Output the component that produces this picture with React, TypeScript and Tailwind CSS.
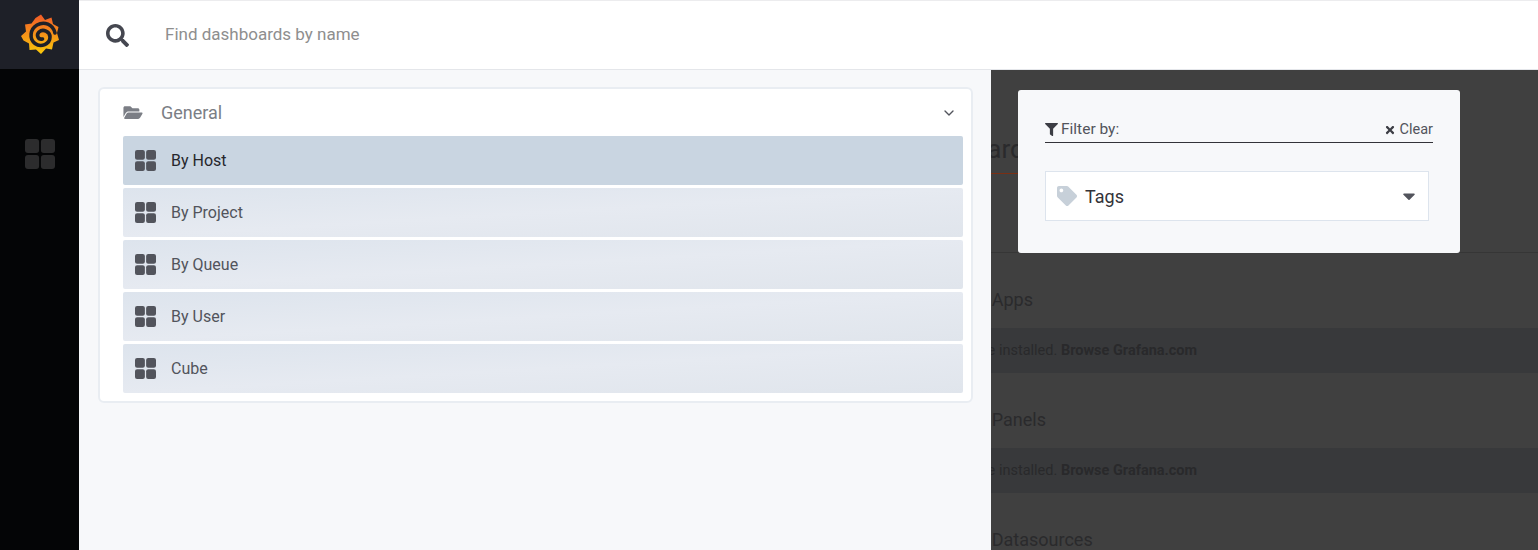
import { ChevronDown } from "lucide-react";
import { FaCaretDown, FaFilter, FaFolderOpen, FaSearch, FaTag, FaTimes } from "react-icons/fa";

const dashboards = ["By Host", "By Project", "By Queue", "By User", "Cube"];

const plugins = ["Installed Apps", "Installed Panels", "Installed Datasources"];

function GridIcon({ className }: { className: string }) {
  return (
    <svg viewBox="0 0 20 20" className={className} fill="currentColor">
      <rect x="0" y="0" width="9.4" height="9.4" rx="2" />
      <rect x="10.6" y="0" width="9.4" height="9.4" rx="2" />
      <rect x="0" y="10.6" width="9.4" height="9.4" rx="2" />
      <rect x="10.6" y="10.6" width="9.4" height="9.4" rx="2" />
    </svg>
  );
}

function GrafanaLogo() {
  return (
    <svg viewBox="0 0 40 44" className="h-[44px] w-[40px]">
      <defs>
        <linearGradient id="flame" x1="0" y1="0" x2="0" y2="1">
          <stop offset="0" stopColor="#f05a28" />
          <stop offset="1" stopColor="#fbca0a" />
        </linearGradient>
      </defs>
      <path
        fill="url(#flame)"
        d="M21 1.5 L25 7 L31.5 4.5 L33 11 L38.5 14 L37 20 L39 27 L33.5 29.5 L32 36.5 L26 35.5 L21 41 L16 36.5 L9.5 37 L9 30.5 L3.5 27.5 L1 23 L6 18.5 L5 11.5 L11.5 10.5 L15.5 5 Z"
      />
      <path
        fill="none"
        stroke="#1e2028"
        strokeWidth="3.6"
        strokeLinecap="round"
        d="M35 20 C33 11 24 8 17 12 C10 16 9 26 15 30.5 C21 35 30 31 30 24 C30 18.5 23 15.5 19 19 C16 22 18 27 22.5 26"
      />
    </svg>
  );
}

function Backdrop() {
  return (
    <div className="flex h-full flex-col overflow-hidden bg-[#404040] text-[#2a2a2c]">
      <div className="ml-[-92px] h-[183px] shrink-0 border-b border-[#363636] pt-[62px]">
        <div className="inline-block h-[42px] border-b border-[#7a2f14] pr-[24px] text-[26px] leading-[34px]">
          Dashboards
        </div>
      </div>
      {plugins.map((title) => (
        <div key={title} className="shrink-0">
          <div className="ml-[-72px] flex h-[75px] items-end pb-[14px] text-[18px] leading-[28px]">{title}</div>
          <div className="ml-[-30px] flex h-[45px] items-center bg-[#38393b] text-[14.5px] text-[#29292b]">
            <span>
              None installed. <strong className="font-bold">Browse Grafana.com</strong>
            </span>
          </div>
        </div>
      ))}
    </div>
  );
}

function FilterPopover() {
  return (
    <div className="absolute left-[27px] top-[20px] h-[163px] w-[442px] rounded-[3px] bg-[#f7f8fa] pl-[27px] pr-[27px] pt-[29px]">
      <div className="flex h-[24px] items-center justify-between border-b border-[#333339] pb-[2px] text-[#52545c]">
        <div className="flex items-center gap-[3px] text-[15.5px]">
          <FaFilter className="h-[13px] w-[13px] text-[#3c3d44]" />
          <span>Filter by:</span>
        </div>
        <div className="flex items-center gap-[4px] text-[14.5px]">
          <FaTimes className="h-[12px] w-[12px] text-[#3c3d44]" />
          <span>Clear</span>
        </div>
      </div>
      <div className="mt-[28px] flex h-[50px] w-[384px] items-center border border-[#dde4ed] bg-white pl-[11px] pr-[12px]">
        <FaTag className="h-[20px] w-[20px] text-[#c7d0d9]" />
        <span className="ml-[8px] flex-1 text-[18px] text-[#333339]">Tags</span>
        <FaCaretDown className="h-[20px] w-[14px] text-[#52545c]" />
      </div>
    </div>
  );
}

export default function App() {
  return (
    <div className="flex h-[550px] w-[1538px] overflow-hidden bg-white font-['Roboto',sans-serif]">
      <aside className="flex w-[79px] shrink-0 flex-col bg-[#040506]">
        <div className="flex h-[69px] items-center justify-center bg-[#1e2028]">
          <GrafanaLogo />
        </div>
        <div className="flex justify-center pt-[70px]">
          <GridIcon className="h-[30px] w-[30px] text-[#2c2c2d]" />
        </div>
      </aside>
      <main className="flex min-w-0 flex-1 flex-col">
        <header className="flex h-[70px] shrink-0 items-center border-y border-y-[#e4e6ea] border-t-[#ececee] bg-white pl-[27px]">
          <FaSearch className="h-[23px] w-[23px] text-[#454750]" />
          <span className="ml-[36px] text-[17px] text-[#8e8e8e]">Find dashboards by name</span>
        </header>
        <div className="flex min-h-0 flex-1">
          <section className="w-[912px] shrink-0 bg-[#f7f8fa] pl-[19px] pt-[17px]">
            <div className="h-[316px] w-[875px] rounded-[6px] border-2 border-[#e9edf2] bg-white pb-[8px] pl-[23px] pr-[8px]">
              <div className="flex h-[47px] items-center pr-[6px] text-[#7b7e85]">
                <FaFolderOpen className="h-[17px] w-[20px] text-[#7b7e85]" />
                <span className="ml-[18px] flex-1 text-[18px]">General</span>
                <ChevronDown className="h-[16px] w-[16px] text-[#52545c]" strokeWidth={2} />
              </div>
              <div className="flex flex-col gap-[3px]">
                {dashboards.map((name, index) => (
                  <div
                    key={name}
                    className={
                      index === 0
                        ? "flex h-[49px] items-center rounded-[2px] bg-[#c9d5e1] pl-[12px] text-[#26272c]"
                        : "flex h-[49px] items-center rounded-[2px] bg-gradient-to-br from-[#dde4ed] via-[#e6eaf1] to-[#e0e5ec] pl-[12px] text-[#52545c]"
                    }
                  >
                    <GridIcon className="h-[21px] w-[21px] text-[#52545c]" />
                    <span className="ml-[15px] text-[16px]">{name}</span>
                  </div>
                ))}
              </div>
            </div>
          </section>
          <section className="relative min-w-0 flex-1">
            <Backdrop />
            <FilterPopover />
          </section>
        </div>
      </main>
    </div>
  );
}
